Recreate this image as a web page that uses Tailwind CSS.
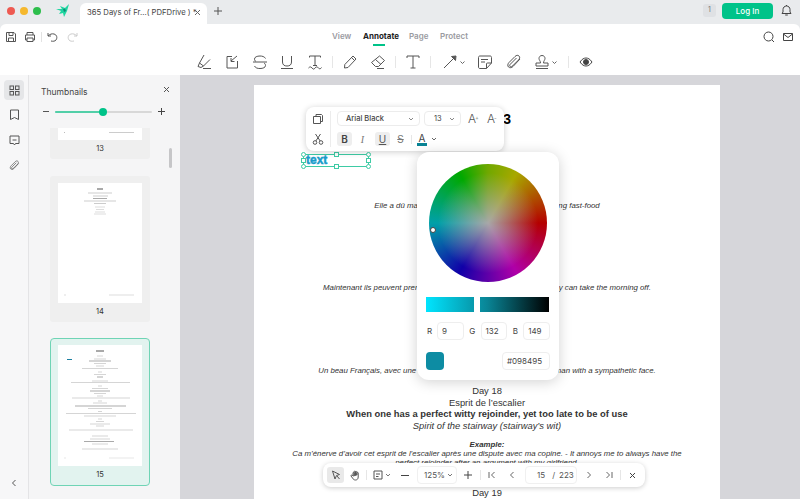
<!DOCTYPE html>
<html lang="en">

<head>
    <meta charset="UTF-8">
    <title>PDF Annotate</title>
    <script src="https://cdn.jsdelivr.net/npm/@tailwindcss/browser@4"></script>
</head>

<body class="bg-white">
    <div class="relative w-[800px] h-[499px] overflow-hidden flex flex-col bg-[#e9ebed] font-['Inter',sans-serif] text-[#333]">

        <!-- Title bar -->
        <div class="h-[24px] bg-[#e9ebed] flex shrink-0">
            <div class="flex items-center gap-[5px] pl-[7px] pb-[2px]">
                <span class="w-[8px] h-[8px] rounded-full bg-[#ee5a52]"></span>
                <span class="w-[8px] h-[8px] rounded-full bg-[#f5b82e]"></span>
                <span class="w-[8px] h-[8px] rounded-full bg-[#2dbe4c]"></span>
            </div>
            <svg class="ml-[15px] mt-[4px] w-[14px] h-[14px]" viewBox="0 0 14 14">
                <path d="M0 5 L6 5 L4 2 L9 4 L13 0 L11 7 L8 13 L7 9 L3 10 L5 7Z" fill="#1fd6a0" />
                <path d="M7 5 L9 4.500 L10 7 L8 8Z" fill="#128a78" />
            </svg>
            <div class="ml-[10px] mt-[3px] w-[127px] h-[21px] bg-white rounded-t-md flex items-center pl-[7px] pb-[2px] text-[7.7px] text-[#444] whitespace-nowrap">
                <span class="w-[108px]">365 Days of Fr...( PDFDrive ) *</span>
                <svg class="-ml-[1px] w-[7px] h-[7px] stroke-[#666] fill-none" viewBox="0 0 7 7"><path d="M1 1L6 6M6 1L1 6" /></svg>
            </div>
            <svg class="ml-[7px] mt-[7px] w-[8px] h-[8px] stroke-[#555] fill-none" viewBox="0 0 8 8"><path d="M4 0V8M0 4H8" /></svg>
            <div class="ml-auto flex items-center pb-[3px] pr-[7px]">
                <span class="w-[13px] h-[13px] rounded-[3px] bg-[#dfe1e4] text-[7px] text-[#777] flex items-center justify-center">1</span>
                <span class="ml-[6px] w-[51px] h-[16px] rounded-[4px] bg-[#00c389] text-white text-[8px] font-medium flex items-center justify-center">Log In</span>
                <svg class="ml-[7px] w-[13px] h-[13px] stroke-[#444] fill-none" viewBox="0 0 13 13"><path d="M2 9.5H11L10 8V5.5C10 3.5 8.5 2 6.5 2S3 3.5 3 5.5V8ZM5.2 11H7.8M6.5 2V1" /></svg>
            </div>
        </div>

        <!-- Main toolbar -->
        <div class="h-[51px] bg-white rounded-t-md shrink-0">
            <div class="relative h-[25px] flex items-center pl-[5px] text-[#555]">
                <svg class="w-[12px] h-[12px] stroke-[#555] fill-none" viewBox="0 0 12 12"><path d="M1.5 1.5H9L10.5 3V10.5H1.5ZM4 1.5V4.5H8V1.5M3.5 10.5V7H8.5V10.5" /></svg>
                <svg class="ml-[7px] w-[12px] h-[12px] stroke-[#555] fill-none" viewBox="0 0 12 12"><path d="M3 4V1.5H9V4M3 9H1.5V4H10.5V9H9M3 7H9V10.5H3Z" /></svg>
                <span class="ml-[5px] w-px h-[10px] bg-[#e2e2e2]"></span>
                <svg class="ml-[5px] w-[12px] h-[12px] stroke-[#555] fill-none" viewBox="0 0 12 12"><path d="M1 2V5H4M1 5C3 3 5 2.500 7 3C10 3.800 10.500 7 9 9C8 10.300 6 10.500 4 10" /></svg>
                <svg class="ml-[7px] w-[12px] h-[12px] stroke-[#ccc] fill-none" viewBox="0 0 12 12"><path d="M11 2V5H8M11 5C9 3 7 2.500 5 3C2 3.800 1.500 7 3 9C4 10.300 6 10.500 8 10" /></svg>
                <div class="absolute left-[332px] top-[6px] flex text-[8px] font-semibold text-[#9a9a9f] leading-[12px]">
                    <span class="w-[31px]">View</span>
                    <span class="relative w-[46px] text-[#222] font-bold">Annotate
                        <span class="absolute left-[10px] top-[14px] w-[12px] h-[2px] bg-[#00c389]"></span>
                    </span>
                    <span class="w-[31px]">Page</span>
                    <span>Protect</span>
                </div>
                <svg class="ml-auto w-[12px] h-[12px] stroke-[#444] fill-none" viewBox="0 0 12 12"><circle cx="5.500" cy="5.500" r="4.500" /><path d="M9 9L11 11" /></svg>
                <svg class="ml-[7px] mr-[6px] w-[12px] h-[12px] stroke-[#444] fill-none" viewBox="0 0 12 12"><path d="M1.500 2.500H10.500V9.500H1.500ZM1.500 3L6 6.500L10.500 3" /></svg>
            </div>
            <div class="flex items-center h-[26px] pl-[197px]">
                <!-- highlighter -->
                <svg class="w-[16px] h-[16px] stroke-[#555] fill-none" viewBox="0 0 16 16"><path d="M7 1L2.500 9L6.500 12L13 5.500M2.500 9L1 12.500L4 13.500L6.500 12M6 14.500H14" /></svg>
                <!-- note with arrow -->
                <svg class="ml-[11px] w-[16px] h-[16px] stroke-[#555] fill-none" viewBox="0 0 16 16"><path d="M8 2.500H3V14H13.500V7M13 2L7 7M7 4V7.500H10.500" /></svg>
                <!-- strikethrough -->
                <svg class="ml-[12px] w-[16px] h-[16px] stroke-[#555] fill-none" viewBox="0 0 16 16"><path d="M13.500 4.500C12.500 2.500 10 2 8 2C5 2 2.500 3 2.500 5C2.500 6 3 7 4 7.500M1 8H15M12 9C13 9.500 13.500 10.500 13.500 11.500C13.500 13.500 11 14.500 8 14.500C5.500 14.500 3.500 14 2.500 12" /></svg>
                <!-- underline -->
                <svg class="ml-[11px] w-[16px] h-[16px] stroke-[#555] fill-none" viewBox="0 0 16 16"><path d="M3.500 2V8C3.500 11 5.500 12 8 12S12.500 11 12.500 8V2M2 14.500H14" /></svg>
                <!-- squiggly text -->
                <svg class="ml-[12px] w-[16px] h-[16px] stroke-[#555] fill-none" viewBox="0 0 16 16"><path d="M2.500 3.500V2H13.500V3.500M8 2V11.500M6 11.500H10M1.500 14C3 12.500 3.500 12.500 5 14S7 15.500 8 14S10.500 12.500 11.500 14S13.500 15 14.500 13.500" /></svg>
                <span class="ml-[9px] w-px h-[12px] bg-[#e6e6e6]"></span>
                <!-- pencil -->
                <svg class="ml-[9px] w-[16px] h-[16px] stroke-[#555] fill-none" viewBox="0 0 16 16"><path d="M11 2L14 5L6 13.500L2.500 14L2.800 10.500ZM9.500 3.500L12.500 6.500" /></svg>
                <!-- eraser -->
                <svg class="ml-[12px] w-[16px] h-[16px] stroke-[#555] fill-none" viewBox="0 0 16 16"><path d="M9.500 2L14.500 6.500L8.500 12.500H5.500L1.500 8.500ZM5.500 5.500L11 10.500M7 14.500H14" /></svg>
                <span class="ml-[9px] w-px h-[12px] bg-[#e6e6e6]"></span>
                <!-- text -->
                <svg class="ml-[9px] w-[16px] h-[16px] stroke-[#555] fill-none" viewBox="0 0 16 16"><path d="M2 4V2H14V4M8 2V14M5.500 14H10.500" /></svg>
                <span class="ml-[9px] w-px h-[12px] bg-[#e6e6e6]"></span>
                <!-- arrow -->
                <svg class="ml-[11px] w-[16px] h-[16px] stroke-[#555] fill-none" viewBox="0 0 16 16"><path d="M2 14L12 4" /><path d="M9.500 2.500L14 2L13.500 6.500Z" fill="#555" /></svg>
                <svg class="ml-[1px] w-[7px] h-[7px] stroke-[#666] fill-none" viewBox="0 0 7 7"><path d="M1.500 2.500L3.500 4.500L5.500 2.500" /></svg>
                <!-- sticky note -->
                <svg class="ml-[11px] w-[16px] h-[16px] stroke-[#555] fill-none" viewBox="0 0 16 16"><path d="M3 2H13C14 2 14.500 2.500 14.500 3.500V9L9.500 14.500H3C2 14.500 1.500 14 1.500 13V3.500C1.500 2.500 2 2 3 2ZM14.500 9H10.500C9.800 9 9.500 9.300 9.500 10V14.500M4 5.500H11M4 8H8" /></svg>
                <!-- paperclip -->
                <svg class="ml-[13px] w-[16px] h-[16px] stroke-[#555] fill-none" viewBox="0 0 16 16"><path d="M14 5L7 12.500C5.500 14 3.500 14 2.500 13S1.500 10 3 8.500L9 2.500C10.500 1 12 1 13 2S14 4.500 12.500 6L6.500 12C5.500 13 4.500 13 4 12.500S3.500 11 4.500 10L10.500 4" /></svg>
                <!-- stamp -->
                <svg class="ml-[12px] w-[16px] h-[16px] stroke-[#555] fill-none" viewBox="0 0 16 16"><path d="M8 1.500C6 1.500 5 3 5 4.500C5 6 6.500 7 6.500 9H2V12H14V9H9.500C9.500 7 11 6 11 4.500C11 3 10 1.500 8 1.500ZM2 14.500H14" /></svg>
                <svg class="ml-[1px] w-[7px] h-[7px] stroke-[#666] fill-none" viewBox="0 0 7 7"><path d="M1.500 2.500L3.500 4.500L5.500 2.500" /></svg>
                <span class="ml-[10px] w-px h-[12px] bg-[#e6e6e6]"></span>
                <!-- eye -->
                <svg class="ml-[10px] w-[14px] h-[14px] stroke-[#444] fill-none" viewBox="0 0 14 14"><path d="M1 7C3 4 5 3 7 3S11 4 13 7C11 10 9 11 7 11S3 10 1 7Z" /><circle cx="7" cy="7" r="2.500" fill="#444" /></svg>
            </div>
        </div>

        <div class="flex-1 flex min-h-0">
            <!-- Icon rail -->
            <div class="w-[29px] shrink-0 bg-[#f7f7f8] border-r border-[#e4e4e6] flex flex-col items-center pt-[5px] relative">
                <div class="w-[20px] h-[20px] rounded-[4px] bg-[#e5e6e8] flex items-center justify-center">
                    <svg class="w-[11px] h-[11px] stroke-[#555] fill-none" viewBox="0 0 11 11"><rect x="1" y="1" width="3.500" height="3.500" /><rect x="6.500" y="1" width="3.500" height="3.500" /><rect x="1" y="6.500" width="3.500" height="3.500" /><rect x="6.500" y="6.500" width="3.500" height="3.500" /></svg>
                </div>
                <svg class="mt-[9px] w-[11px] h-[11px] stroke-[#555] fill-none" viewBox="0 0 11 11"><path d="M1.500 1H9.500V10.500L5.500 8.500L1.500 10.500Z" /></svg>
                <svg class="mt-[15px] w-[11px] h-[11px] stroke-[#555] fill-none" viewBox="0 0 11 11"><path d="M1 1H10V8.500H6.500L5.500 10L4.500 8.500H1ZM3.500 5H7.500" /></svg>
                <svg class="mt-[14px] w-[11px] h-[11px] stroke-[#555] fill-none" viewBox="0 0 16 16"><path d="M14 5L7 12.500C5.500 14 3.500 14 2.500 13S1.500 10 3 8.500L9 2.500C10.500 1 12 1 13 2S14 4.500 12.500 6L6.500 12C5.500 13 4.500 13 4 12.500S3.500 11 4.500 10L10.500 4" /></svg>
                <svg class="mt-auto mb-[12px] w-[8px] h-[8px] stroke-[#555] fill-none" viewBox="0 0 8 8"><path d="M5.500 1L2.500 4L5.500 7" /></svg>
            </div>

            <!-- Thumbnails panel -->
            <div class="w-[151px] shrink-0 bg-[#f5f5f6] flex flex-col relative">
                <div class="h-[53px] shrink-0 relative">
                    <div class="flex justify-between pl-[12px] pr-[10px] pt-[11px]">
                        <span class="text-[8.5px] leading-[12px] text-[#444]">Thumbnails</span>
                        <svg class="w-[7px] h-[7px] stroke-[#555] fill-none" viewBox="0 0 7 7"><path d="M1 1L6 6M6 1L1 6" /></svg>
                    </div>
                    <div class="flex items-center pl-[14px] mt-[10px]">
                        <span class="w-[6px] h-px bg-[#555]"></span>
                        <div class="relative ml-[6px] w-[97px] h-[2px] rounded-full bg-[#d8d8d8]">
                            <div class="w-[48px] h-[2px] rounded-full bg-[#52cfa8]"></div>
                            <span class="absolute left-[44px] -top-[3px] w-[8px] h-[8px] rounded-full bg-[#00c389]"></span>
                        </div>
                        <svg class="ml-[6px] w-[7px] h-[7px] stroke-[#444] fill-none" viewBox="0 0 7 7"><path d="M3.500 0V7M0 3.500H7" /></svg>
                    </div>
                </div>
                <div class="absolute left-[140px] top-[73px] w-[3px] h-[20px] rounded-full bg-[#c6c6c8]"></div>
                <div class="flex-1 overflow-hidden pl-[21px]">
                    <!-- page 13 -->
                    <div class="w-[100px] h-[31px] bg-[#efefef] rounded-b-[3px] flex flex-col items-center">
                        <div class="w-[84px] h-[12px] bg-white flex items-start"><span class="ml-[6px] mt-[4px] w-px h-px bg-[#bbb]"></span><span class="ml-auto mr-[8px] mt-[4px] w-[25px] h-px bg-[#ccc]"></span></div>
                        <span class="text-[7.5px] leading-[17px] text-[#333]">13</span>
                    </div>
                    <!-- page 14 -->
                    <div class="mt-[17px] w-[100px] h-[146px] bg-[#efefef] rounded-[3px] flex flex-col items-center pt-[7px]">
                        <svg class="w-[84px] h-[120px] bg-white" viewBox="0 0 84 120">
                            <g stroke="#999" stroke-width="0.500">
                                <path d="M39 6H45" stroke="#555" stroke-width="1" />
                                <path d="M30 10H54M35 13H50" />
                                <path d="M35 15.500H49" stroke="#555" />
                                <path d="M26 18H58M36 20.500H48" />
                                <path d="M37 24H47M38 26.500H46M37 29H47M36 31H48" stroke="#bbb" />
                                <path d="M6 112H8M51 112H76" stroke="#bbb" />
                            </g>
                        </svg>
                        <span class="text-[7.5px] leading-[16px] mt-[1px] text-[#333]">14</span>
                    </div>
                    <!-- page 15 -->
                    <div class="mt-[16px] w-[100px] h-[148px] bg-[#e2f3ef] border border-[#6fd4b5] rounded-[4px] flex flex-col items-center pt-[6px]">
                        <svg class="w-[84px] h-[121px] bg-white" viewBox="0 0 84 121">
                            <g stroke="#aaa" stroke-width="0.500">
                                <path d="M38 6H46" stroke="#555" stroke-width="1" />
                                <path d="M39 11H45M36 14H48" />
                                <path d="M31 16H53" stroke="#555" />
                                <path d="M36 18.500H48M38 21H46M24 23.500H60" />
                                <path d="M9 14.500H14" stroke="#1b7fa0" stroke-width="1" />
                                <path d="M40 27H44M36 29.500H48" />
                                <path d="M39 32H45" stroke="#555" />
                                <path d="M34 36H50M13 37.500H72" />
                                <path d="M40 41H44M34 43.500H50" />
                                <path d="M32 46H52" stroke="#555" />
                                <path d="M36 48.500H48M39 51H45M14 53H72" />
                                <path d="M40 56H44M35 58H49" />
                                <path d="M17 61H68" stroke="#555" />
                                <path d="M30 63.500H54M40 66.500H44M8 68.500H78M26 71H58" />
                                <path d="M40 74H44M38 76.500H46M32 79H52M38 81H46" />
                                <path d="M11 85H75M34 91H50M32 94H52" />
                                <path d="M26 96.500H56" stroke="#555" />
                                <path d="M34 99H50M24 104H60" />
                                <path d="M6 113H8M51 113H76" stroke="#ccc" />
                            </g>
                        </svg>
                        <span class="text-[7.5px] leading-[16px] mt-[1px] text-[#333]">15</span>
                    </div>
                </div>
            </div>

            <!-- Document -->
            <div class="flex-1 min-w-0 bg-[#d6d6da] pl-[74px] pt-[10px] overflow-hidden">
                <div class="w-[466px] h-[430px] bg-white text-center font-['Liberation_Sans',Arial,sans-serif] text-[#333] text-[9.4px] leading-[11.5px] whitespace-nowrap">
                    <div class="pt-[25px] h-[43px] text-[14px] leading-[18px] font-bold text-black">Week 3</div>
                    <div class="mt-[71.5px] h-[11px] leading-[11px] text-[7.84px] italic">Elle a dû manger dans une chaîne US - She was eating fast-food</div>
                    <div class="mt-[71px] h-[11px] leading-[11px] text-[7.84px] italic">Maintenant ils peuvent prendre leur matinée de repos - And now they can take the morning off.</div>
                    <div class="mt-[72px] h-[11px] leading-[11px] text-[7.84px] italic">Un beau Français, avec une tête sympathique - A handsome Frenchman with a sympathetic face.</div>
                    <div class="mt-[9.5px]">Day 18</div>
                    <div>Esprit de l’escalier</div>
                    <div class="font-bold">When one has a perfect witty rejoinder, yet too late to be of use</div>
                    <div class="italic">Spirit of the stairway (stairway’s wit)</div>
                    <div class="mt-[8.5px] text-[7.84px] leading-[9.500px] font-bold italic">Example:</div>
                    <div class="text-[7.84px] leading-[9px] italic">Ca m’énerve d’avoir cet esprit de l’escalier après une dispute avec ma copine. - It annoys me to always have the</div>
                    <div class="text-[7.84px] leading-[9px] italic">perfect rejoinder after an argument with my girlfriend.</div>
                    <div class="mt-[19.5px]">Day 19</div>
                </div>
            </div>
        </div>

        <!-- Selected text box -->
        <div class="absolute left-[303px] top-[154px] w-[66px] h-[13px] border border-[#3ecba5] flex items-center">
            <span class="pl-[2px] font-['Liberation_Sans',sans-serif] font-black text-[12px] leading-[11px] text-[#1a9ccb] [-webkit-text-stroke:0.5px_#1a9ccb]">text</span>
            <span class="absolute -left-[3px] -top-[3px] w-[5px] h-[5px] rounded-full bg-white border border-[#3ecba5]"></span>
            <span class="absolute left-[30px] -top-[3px] w-[5px] h-[5px] bg-white border border-[#3ecba5]"></span>
            <span class="absolute -right-[3px] -top-[3px] w-[5px] h-[5px] rounded-full bg-white border border-[#3ecba5]"></span>
            <span class="absolute -left-[3px] top-[3px] w-[5px] h-[5px] bg-white border border-[#3ecba5]"></span>
            <span class="absolute -right-[3px] top-[3px] w-[5px] h-[5px] bg-white border border-[#3ecba5]"></span>
            <span class="absolute -left-[3px] -bottom-[3px] w-[5px] h-[5px] rounded-full bg-white border border-[#3ecba5]"></span>
            <span class="absolute left-[30px] -bottom-[3px] w-[5px] h-[5px] bg-white border border-[#3ecba5]"></span>
            <span class="absolute -right-[3px] -bottom-[3px] w-[5px] h-[5px] rounded-full bg-white border border-[#3ecba5]"></span>
        </div>

        <!-- Text format toolbar -->
        <div class="absolute left-[306px] top-[107px] w-[198px] h-[44px] bg-white rounded-lg shadow-[0_1px_6px_rgba(0,0,0,0.2)] flex text-[#555]">
            <div class="w-[25px] border-r border-[#ececec] my-[4px] flex flex-col items-center pt-[2px]">
                <svg class="w-[12px] h-[12px] stroke-[#555] fill-none" viewBox="0 0 12 12"><path d="M4 3.500V1.500H9.500L10.500 2.500V8.500H8.500M1.500 3.500H8.500V10.500H1.500Z" /></svg>
                <svg class="mt-[8px] w-[12px] h-[12px] stroke-[#555] fill-none" viewBox="0 0 12 12"><circle cx="3" cy="9.500" r="1.800" /><circle cx="9" cy="9.500" r="1.800" /><path d="M3.800 8L8.500 1M8.200 8L3.500 1" /></svg>
            </div>
            <div class="pl-[6px] pt-[4px]">
                <div class="flex items-center">
                    <div class="w-[83px] h-[15px] border border-[#ececec] rounded-[4px] flex items-center pl-[8px] pr-[5px] text-[7.5px] font-medium text-[#444]">Arial Black
                        <svg class="ml-auto w-[6px] h-[6px] stroke-[#888] fill-none" viewBox="0 0 6 6"><path d="M1 2L3 4L5 2" /></svg>
                    </div>
                    <div class="ml-[4px] w-[37px] h-[15px] border border-[#ececec] rounded-[4px] flex items-center pl-[9px] pr-[5px] text-[7.5px] text-[#444]">13
                        <svg class="ml-auto w-[6px] h-[6px] stroke-[#888] fill-none" viewBox="0 0 6 6"><path d="M1 2L3 4L5 2" /></svg>
                    </div>
                    <span class="ml-[7px] w-[12px] text-[12px] font-light leading-[12px] text-[#555] whitespace-nowrap">A<sup class="text-[6px] -ml-px">+</sup></span>
                    <span class="ml-[7px] w-[12px] text-[12px] font-light leading-[12px] text-[#555] whitespace-nowrap">A<sup class="text-[6px] -ml-px">-</sup></span>
                </div>
                <div class="flex items-center mt-[6px] h-[14px] text-[10px]">
                    <span class="w-[15px] h-[14px] rounded-[3px] bg-[#eeeeee] flex items-center justify-center font-semibold text-[#444]">B</span>
                    <span class="ml-[3px] w-[15px] text-center italic font-['Liberation_Serif',serif] text-[#777]">I</span>
                    <span class="ml-[5px] w-[15px] h-[14px] rounded-[3px] bg-[#eeeeee] flex items-center justify-center underline text-[#555]">U</span>
                    <span class="ml-[3px] w-[15px] text-center line-through text-[#777]">S</span>
                    <span class="ml-[3px] w-px h-[9px] bg-[#e6e6e6]"></span>
                    <div class="ml-[4px] w-[12px] flex flex-col items-center">
                        <span class="leading-[10px] text-[#444]">A</span>
                        <span class="w-[10px] h-[3px] bg-[#098495]"></span>
                    </div>
                    <svg class="ml-[3px] w-[6px] h-[6px] stroke-[#666] fill-none" viewBox="0 0 6 6"><path d="M1 2L3 4L5 2" /></svg>
                </div>
            </div>
        </div>

        <!-- Color picker -->
        <div class="absolute left-[417px] top-[152px] w-[142px] h-[228px] bg-white rounded-xl shadow-[0_2px_14px_rgba(0,0,0,0.18)] px-[9px] pt-[12px] text-[8px] text-[#444]">
            <div class="relative ml-[3px] w-[118px] h-[118px] rounded-full bg-[conic-gradient(#70a800_0deg,#a8a800_30deg,#b40000_90deg,#b000a8_150deg,#1000a8_210deg,#00a0a8_270deg,#00a800_330deg,#70a800_360deg)]">
                <div class="w-full h-full rounded-full bg-[radial-gradient(circle_closest-side,#a8a8a8_0%,rgba(168,168,168,0.6)_35%,rgba(168,168,168,0)_85%)]"></div>
                <span class="absolute left-[1px] top-[63px] w-[6px] h-[6px] rounded-full bg-white border border-[#444]"></span>
            </div>
            <div class="relative mt-[15px] w-[123px] h-[15px] bg-[linear-gradient(90deg,#00e5ff,#098495_50%,#000)]">
                <span class="absolute left-[48px] top-0 w-[6px] h-[15px] bg-white"></span>
            </div>
            <div class="mt-[10px] flex items-center h-[18px]">
                <span class="w-[11px] pl-[1px]">R</span>
                <span class="w-[27px] h-[18px] border border-[#eeeeee] rounded-[4px] pl-[4px] leading-[16px]">9</span>
                <span class="w-[17px] text-center">G</span>
                <span class="w-[27px] h-[18px] border border-[#eeeeee] rounded-[4px] pl-[4px] leading-[16px]">132</span>
                <span class="w-[16px] text-center">B</span>
                <span class="w-[27px] h-[18px] border border-[#eeeeee] rounded-[4px] pl-[4px] leading-[16px]">149</span>
            </div>
            <div class="mt-[12px] flex justify-between items-center">
                <span class="w-[18px] h-[18px] rounded-[4px] bg-[#0d8ca3]"></span>
                <span class="w-[48px] h-[18px] border border-[#eeeeee] rounded-[4px] pl-[4px] leading-[16px]">#098495</span>
            </div>
        </div>

        <!-- Bottom page bar -->
        <div class="absolute left-[323px] top-[463px] w-[322px] h-[24px] bg-white rounded-lg shadow-[0_1px_5px_rgba(0,0,0,0.2)] flex items-center text-[8px] text-[#555]">
            <span class="ml-[4px] w-[17px] h-[16px] rounded-[3px] bg-[#e9e9e9] flex items-center justify-center">
                <svg class="w-[10px] h-[10px] stroke-[#555] fill-none" viewBox="0 0 10 10"><path d="M1.500 1L8.500 4.500L5.500 5.500L4 9ZM6 6L8.500 9" /></svg>
            </span>
            <svg class="ml-[6px] w-[11px] h-[11px] stroke-[#555] fill-none" viewBox="0 0 11 11"><path d="M3 6V3C3 2 4.200 2 4.200 3V5M4.200 5V1.800C4.200 0.800 5.500 0.800 5.500 1.800V5M5.500 5V2.200C5.500 1.200 6.800 1.200 6.800 2.200V5M6.800 5V3C6.800 2 8.200 2 8.200 3V7C8.200 9 7 10 5.500 10C4 10 3.300 9.300 2.500 8L1 6C0.800 5 1.800 4.500 3 6Z" /></svg>
            <span class="ml-[5px] w-px h-[10px] bg-[#e6e6e6]"></span>
            <svg class="ml-[6px] w-[10px] h-[10px] stroke-[#555] fill-none" viewBox="0 0 10 10"><path d="M1 1H9V9H1ZM3 4H7M3 6.500H5.500" /></svg>
            <svg class="ml-[2px] w-[6px] h-[6px] stroke-[#777] fill-none" viewBox="0 0 6 6"><path d="M1 2L3 4L5 2" /></svg>
            <span class="ml-[10px] w-[8px] h-px bg-[#444]"></span>
            <span class="ml-[8px] w-[40px] h-[18px] border border-[#f0f0f0] rounded-[4px] flex items-center pl-[6px] pr-[3px]">125%
                <svg class="ml-auto w-[6px] h-[6px] stroke-[#777] fill-none" viewBox="0 0 6 6"><path d="M1 2L3 4L5 2" /></svg>
            </span>
            <svg class="ml-[7px] w-[8px] h-[8px] stroke-[#444] fill-none" viewBox="0 0 8 8"><path d="M4 0V8M0 4H8" /></svg>
            <span class="ml-[8px] w-px h-[10px] bg-[#e6e6e6]"></span>
            <svg class="ml-[7px] w-[8px] h-[8px] stroke-[#666] fill-none" viewBox="0 0 8 8"><path d="M1 1V7M6.500 1L3.500 4L6.500 7" /></svg>
            <svg class="ml-[12px] w-[8px] h-[8px] stroke-[#666] fill-none" viewBox="0 0 8 8"><path d="M5.500 1L2.500 4L5.500 7" /></svg>
            <span class="ml-[9px] w-[52px] h-[18px] border border-[#f0f0f0] rounded-[4px] flex items-center pl-[11px] whitespace-nowrap">15<span class="ml-[7px]">/</span><span class="ml-[4px]">223</span></span>
            <svg class="ml-[8px] w-[8px] h-[8px] stroke-[#666] fill-none" viewBox="0 0 8 8"><path d="M2.500 1L5.500 4L2.500 7" /></svg>
            <svg class="ml-[12px] w-[8px] h-[8px] stroke-[#666] fill-none" viewBox="0 0 8 8"><path d="M7 1V7M1.500 1L4.500 4L1.500 7" /></svg>
            <span class="ml-[7px] w-px h-[10px] bg-[#e6e6e6]"></span>
            <svg class="ml-[8px] w-[7px] h-[7px] stroke-[#444] fill-none" viewBox="0 0 7 7"><path d="M1 1L6 6M6 1L1 6" /></svg>
        </div>
    </div>
</body>

</html>
